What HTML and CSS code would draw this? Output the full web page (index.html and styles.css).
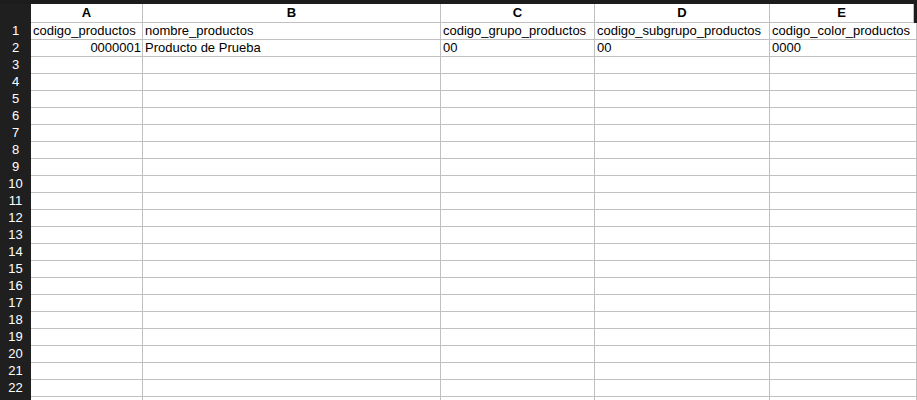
FILE: index.html
```html
<!DOCTYPE html>
<html lang="es">
<head>
    <meta charset="UTF-8">
    <title>productos</title>
    <link rel="stylesheet" href="styles.css">
</head>
<body>
    <div class="top-bar"></div>
    <div class="sheet">
        <!-- Cabecera de columnas -->
        <div class="row head">
            <div class="rownum"></div>
            <div class="cell col-a">A</div>
            <div class="cell col-b">B</div>
            <div class="cell col-c">C</div>
            <div class="cell col-d">D</div>
            <div class="cell col-e">E</div>
        </div>
        <div class="row">
            <div class="rownum">1</div>
            <div class="cell col-a">codigo_productos</div>
            <div class="cell col-b">nombre_productos</div>
            <div class="cell col-c">codigo_grupo_productos</div>
            <div class="cell col-d">codigo_subgrupo_productos</div>
            <div class="cell col-e">codigo_color_productos</div>
        </div>
        <div class="row">
            <div class="rownum">2</div>
            <div class="cell col-a num">0000001</div>
            <div class="cell col-b">Producto de Prueba</div>
            <div class="cell col-c">00</div>
            <div class="cell col-d">00</div>
            <div class="cell col-e">0000</div>
        </div>
        <div class="row"><div class="rownum">3</div><div class="cell col-a"></div><div class="cell col-b"></div><div class="cell col-c"></div><div class="cell col-d"></div><div class="cell col-e"></div></div>
        <div class="row"><div class="rownum">4</div><div class="cell col-a"></div><div class="cell col-b"></div><div class="cell col-c"></div><div class="cell col-d"></div><div class="cell col-e"></div></div>
        <div class="row"><div class="rownum">5</div><div class="cell col-a"></div><div class="cell col-b"></div><div class="cell col-c"></div><div class="cell col-d"></div><div class="cell col-e"></div></div>
        <div class="row"><div class="rownum">6</div><div class="cell col-a"></div><div class="cell col-b"></div><div class="cell col-c"></div><div class="cell col-d"></div><div class="cell col-e"></div></div>
        <div class="row"><div class="rownum">7</div><div class="cell col-a"></div><div class="cell col-b"></div><div class="cell col-c"></div><div class="cell col-d"></div><div class="cell col-e"></div></div>
        <div class="row"><div class="rownum">8</div><div class="cell col-a"></div><div class="cell col-b"></div><div class="cell col-c"></div><div class="cell col-d"></div><div class="cell col-e"></div></div>
        <div class="row"><div class="rownum">9</div><div class="cell col-a"></div><div class="cell col-b"></div><div class="cell col-c"></div><div class="cell col-d"></div><div class="cell col-e"></div></div>
        <div class="row"><div class="rownum">10</div><div class="cell col-a"></div><div class="cell col-b"></div><div class="cell col-c"></div><div class="cell col-d"></div><div class="cell col-e"></div></div>
        <div class="row"><div class="rownum">11</div><div class="cell col-a"></div><div class="cell col-b"></div><div class="cell col-c"></div><div class="cell col-d"></div><div class="cell col-e"></div></div>
        <div class="row"><div class="rownum">12</div><div class="cell col-a"></div><div class="cell col-b"></div><div class="cell col-c"></div><div class="cell col-d"></div><div class="cell col-e"></div></div>
        <div class="row"><div class="rownum">13</div><div class="cell col-a"></div><div class="cell col-b"></div><div class="cell col-c"></div><div class="cell col-d"></div><div class="cell col-e"></div></div>
        <div class="row"><div class="rownum">14</div><div class="cell col-a"></div><div class="cell col-b"></div><div class="cell col-c"></div><div class="cell col-d"></div><div class="cell col-e"></div></div>
        <div class="row"><div class="rownum">15</div><div class="cell col-a"></div><div class="cell col-b"></div><div class="cell col-c"></div><div class="cell col-d"></div><div class="cell col-e"></div></div>
        <div class="row"><div class="rownum">16</div><div class="cell col-a"></div><div class="cell col-b"></div><div class="cell col-c"></div><div class="cell col-d"></div><div class="cell col-e"></div></div>
        <div class="row"><div class="rownum">17</div><div class="cell col-a"></div><div class="cell col-b"></div><div class="cell col-c"></div><div class="cell col-d"></div><div class="cell col-e"></div></div>
        <div class="row"><div class="rownum">18</div><div class="cell col-a"></div><div class="cell col-b"></div><div class="cell col-c"></div><div class="cell col-d"></div><div class="cell col-e"></div></div>
        <div class="row"><div class="rownum">19</div><div class="cell col-a"></div><div class="cell col-b"></div><div class="cell col-c"></div><div class="cell col-d"></div><div class="cell col-e"></div></div>
        <div class="row"><div class="rownum">20</div><div class="cell col-a"></div><div class="cell col-b"></div><div class="cell col-c"></div><div class="cell col-d"></div><div class="cell col-e"></div></div>
        <div class="row"><div class="rownum">21</div><div class="cell col-a"></div><div class="cell col-b"></div><div class="cell col-c"></div><div class="cell col-d"></div><div class="cell col-e"></div></div>
        <div class="row"><div class="rownum">22</div><div class="cell col-a"></div><div class="cell col-b"></div><div class="cell col-c"></div><div class="cell col-d"></div><div class="cell col-e"></div></div>
        <!-- Fila parcialmente visible, sin número -->
        <div class="row"><div class="rownum"></div><div class="cell col-a"></div><div class="cell col-b"></div><div class="cell col-c"></div><div class="cell col-d"></div><div class="cell col-e"></div></div>
    </div>
</body>
</html>
```

FILE: styles.css
```css
/* Estilos base */
body {
    margin: 0;
    padding: 0;
    background: #fff;
    overflow: hidden;
    font-family: "Liberation Sans", Arial, sans-serif;
    font-size: 13px;
    color: #000;
}

/* Barra superior */
.top-bar {
    height: 4px;
    background: #1c1c1c;
}

/* Hoja */
.sheet {
    width: 100vw;
}

.row {
    display: flex;
    height: 17px;
}

.row.head {
    height: 19px;
    background: #1c1c1c;
}

.rownum {
    flex: 0 0 31px;
    background: #1f1f1f;
    color: #fff;
    text-align: center;
    line-height: 16px;
}

.cell {
    box-sizing: border-box;
    height: 17px;
    border-right: 1px solid #c0c0c0;
    border-bottom: 1px solid #c0c0c0;
    padding: 0 2px;
    line-height: 16px;
    white-space: nowrap;
    overflow: hidden;
    background: #fff;
}

.head .cell {
    height: 19px;
    line-height: 18px;
    text-align: center;
    font-weight: bold;
}

.cell.num {
    text-align: right;
    padding-right: 1px;
}

/* Anchos de columna */
.col-a { flex: 0 0 112px; }
.col-b { flex: 0 0 298px; }
.col-c { flex: 0 0 154px; }
.col-d { flex: 0 0 175px; }
.col-e { flex: 1 1 auto; }

.head .col-e {
    margin-right: 3px;
}
```
